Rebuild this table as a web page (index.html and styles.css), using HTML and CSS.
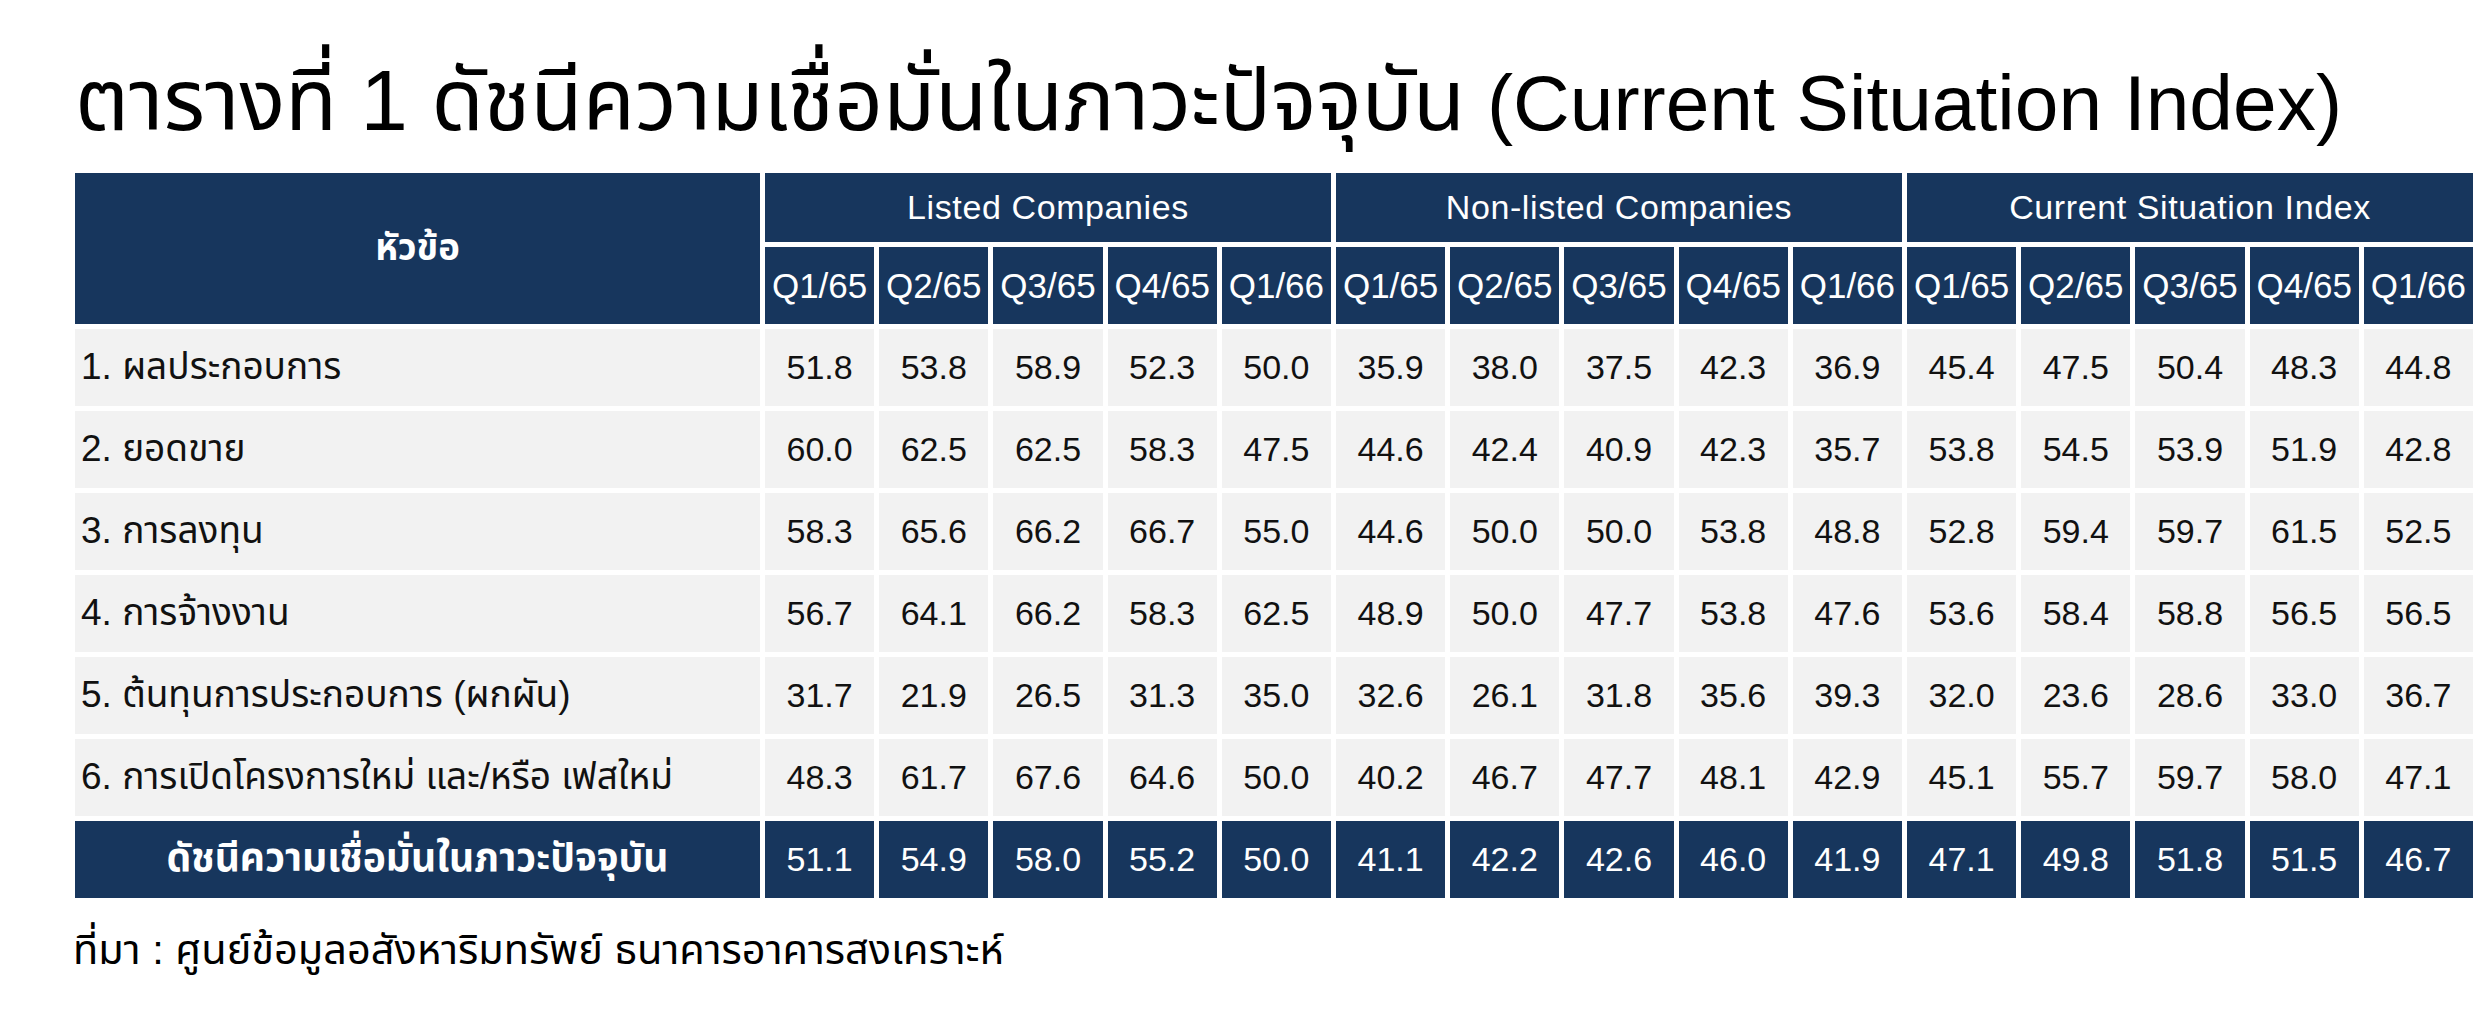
FILE: index.html
```html
<!DOCTYPE html>
<html lang="th">
<head>
<meta charset="utf-8">
<title>ตารางที่ 1 ดัชนีความเชื่อมั่นในภาวะปัจจุบัน</title>
<link rel="stylesheet" href="styles.css">
</head>
<body>
<main class="page">
  <h1 class="title"><span class="title-th">ตารางที่ 1 ดัชนีความเชื่อมั่นในภาวะปัจจุบัน</span> (Current Situation Index)</h1>
  <div class="grid">
    <div class="cell head topic">หัวข้อ</div>
    <div class="cell head group">Listed Companies</div>
    <div class="cell head group">Non-listed Companies</div>
    <div class="cell head group">Current Situation Index</div>

    <div class="cell head q">Q1/65</div><div class="cell head q">Q2/65</div><div class="cell head q">Q3/65</div><div class="cell head q">Q4/65</div><div class="cell head q">Q1/66</div>
    <div class="cell head q">Q1/65</div><div class="cell head q">Q2/65</div><div class="cell head q">Q3/65</div><div class="cell head q">Q4/65</div><div class="cell head q">Q1/66</div>
    <div class="cell head q">Q1/65</div><div class="cell head q">Q2/65</div><div class="cell head q">Q3/65</div><div class="cell head q">Q4/65</div><div class="cell head q">Q1/66</div>

    <div class="cell label">1. ผลประกอบการ</div>
    <div class="cell num">51.8</div><div class="cell num">53.8</div><div class="cell num">58.9</div><div class="cell num">52.3</div><div class="cell num">50.0</div>
    <div class="cell num">35.9</div><div class="cell num">38.0</div><div class="cell num">37.5</div><div class="cell num">42.3</div><div class="cell num">36.9</div>
    <div class="cell num">45.4</div><div class="cell num">47.5</div><div class="cell num">50.4</div><div class="cell num">48.3</div><div class="cell num">44.8</div>

    <div class="cell label">2. ยอดขาย</div>
    <div class="cell num">60.0</div><div class="cell num">62.5</div><div class="cell num">62.5</div><div class="cell num">58.3</div><div class="cell num">47.5</div>
    <div class="cell num">44.6</div><div class="cell num">42.4</div><div class="cell num">40.9</div><div class="cell num">42.3</div><div class="cell num">35.7</div>
    <div class="cell num">53.8</div><div class="cell num">54.5</div><div class="cell num">53.9</div><div class="cell num">51.9</div><div class="cell num">42.8</div>

    <div class="cell label">3. การลงทุน</div>
    <div class="cell num">58.3</div><div class="cell num">65.6</div><div class="cell num">66.2</div><div class="cell num">66.7</div><div class="cell num">55.0</div>
    <div class="cell num">44.6</div><div class="cell num">50.0</div><div class="cell num">50.0</div><div class="cell num">53.8</div><div class="cell num">48.8</div>
    <div class="cell num">52.8</div><div class="cell num">59.4</div><div class="cell num">59.7</div><div class="cell num">61.5</div><div class="cell num">52.5</div>

    <div class="cell label">4. การจ้างงาน</div>
    <div class="cell num">56.7</div><div class="cell num">64.1</div><div class="cell num">66.2</div><div class="cell num">58.3</div><div class="cell num">62.5</div>
    <div class="cell num">48.9</div><div class="cell num">50.0</div><div class="cell num">47.7</div><div class="cell num">53.8</div><div class="cell num">47.6</div>
    <div class="cell num">53.6</div><div class="cell num">58.4</div><div class="cell num">58.8</div><div class="cell num">56.5</div><div class="cell num">56.5</div>

    <div class="cell label">5. ต้นทุนการประกอบการ (ผกผัน)</div>
    <div class="cell num">31.7</div><div class="cell num">21.9</div><div class="cell num">26.5</div><div class="cell num">31.3</div><div class="cell num">35.0</div>
    <div class="cell num">32.6</div><div class="cell num">26.1</div><div class="cell num">31.8</div><div class="cell num">35.6</div><div class="cell num">39.3</div>
    <div class="cell num">32.0</div><div class="cell num">23.6</div><div class="cell num">28.6</div><div class="cell num">33.0</div><div class="cell num">36.7</div>

    <div class="cell label">6. การเปิดโครงการใหม่ และ/หรือ เฟสใหม่</div>
    <div class="cell num">48.3</div><div class="cell num">61.7</div><div class="cell num">67.6</div><div class="cell num">64.6</div><div class="cell num">50.0</div>
    <div class="cell num">40.2</div><div class="cell num">46.7</div><div class="cell num">47.7</div><div class="cell num">48.1</div><div class="cell num">42.9</div>
    <div class="cell num">45.1</div><div class="cell num">55.7</div><div class="cell num">59.7</div><div class="cell num">58.0</div><div class="cell num">47.1</div>

    <div class="cell head total-label">ดัชนีความเชื่อมั่นในภาวะปัจจุบัน</div>
    <div class="cell head total">51.1</div><div class="cell head total">54.9</div><div class="cell head total">58.0</div><div class="cell head total">55.2</div><div class="cell head total">50.0</div>
    <div class="cell head total">41.1</div><div class="cell head total">42.2</div><div class="cell head total">42.6</div><div class="cell head total">46.0</div><div class="cell head total">41.9</div>
    <div class="cell head total">47.1</div><div class="cell head total">49.8</div><div class="cell head total">51.8</div><div class="cell head total">51.5</div><div class="cell head total">46.7</div>
  </div>
  <p class="source">ที่มา : ศูนย์ข้อมูลอสังหาริมทรัพย์ ธนาคารอาคารสงเคราะห์</p>
</main>
</body>
</html>
```

FILE: styles.css
```css
html, body {
  margin: 0;
  padding: 0;
  background: #ffffff;
}

body {
  font-family: "Liberation Sans", Arial, "Noto Sans Thai", "Noto Sans", sans-serif;
  color: #111111;
}

.page {
  width: 2398px;
  padding: 56px 0 0 75px;
}

.title {
  margin: 0 0 27px 0;
  font-size: 78.5px;
  font-weight: normal;
  line-height: 90px;
  height: 90px;
  white-space: nowrap;
  color: #000000;
}

.title-th {
  font-size: 85px;
}

.grid {
  display: grid;
  grid-template-columns: 685px repeat(15, 1fr);
  grid-template-rows: 69px 77px repeat(7, 77px);
  column-gap: 5px;
  row-gap: 5px;
}

.cell {
  display: flex;
  align-items: center;
  justify-content: center;
  background: #f2f2f2;
  font-size: 34px;
  white-space: nowrap;
  overflow: hidden;
}

.head {
  background: #17365d;
  color: #ffffff;
}

.topic {
  grid-row: span 2;
  font-weight: bold;
  font-size: 36.5px;
}

.group {
  grid-column: span 5;
  font-size: 34px;
  letter-spacing: 0.6px;
}

.q {
  font-size: 35px;
}

.label {
  justify-content: flex-start;
  padding-left: 6px;
  font-size: 37px;
}

.num {
  color: #111111;
}

.total-label {
  font-weight: bold;
  font-size: 39px;
}

.source {
  margin: 27px 0 0 -2px;
  font-size: 41.5px;
  line-height: 50px;
  color: #000000;
}
```
